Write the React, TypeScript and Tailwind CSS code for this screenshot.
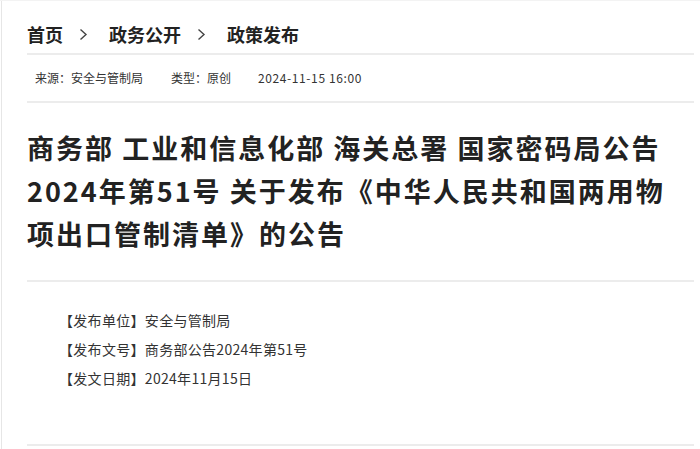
import React from 'react';

const font = { fontFamily: '"Noto Sans CJK SC", "Noto Sans", sans-serif' };

const Chevron = () => (
  <svg width="9" height="13" viewBox="0 0 9 13" fill="none" className="shrink-0">
    <path d="M1.5 1.5 L7 6.5 L1.5 11.5" stroke="#444" strokeWidth="1.4" />
  </svg>
);

const infoRows = [
  { label: '发布单位', value: '安全与管制局' },
  { label: '发布文号', value: '商务部公告2024年第51号' },
  { label: '发文日期', value: '2024年11月15日' },
];

export default function App() {
  return (
    <div
      className="w-[700px] h-[449px] overflow-hidden bg-white border-t border-[#f3f3f3]"
      style={font}
    >
      <div className="ml-px h-full border-l border-[#e6e6e6] pl-[25px]">
        <div className="w-[667px]">
          {/* Breadcrumb */}
          <div className="flex items-center pt-[21px] pb-[7px] text-[18px] leading-[24px] font-bold text-[#222] border-b-2 border-[#ececec]">
            <span>首页</span>
            <span className="ml-[16px] mr-[21px] flex"><Chevron /></span>
            <span>政务公开</span>
            <span className="ml-[16px] mr-[21px] flex"><Chevron /></span>
            <span>政策发布</span>
          </div>

          {/* Meta */}
          <div className="flex items-center h-[48px] pl-[8px] text-[12px] text-[#333] border-b-2 border-[#ececec]">
            <span>来源：安全与管制局</span>
            <span className="ml-[28px]">类型：原创</span>
            <span className="ml-[27px] tracking-[0.6px]">2024-11-15 16:00</span>
          </div>

          {/* Title */}
          <div className="pt-[23px] pb-[25px] border-b-2 border-[#ececec]">
            <h1 className="text-[27px] leading-[43px] font-bold tracking-[2px] text-[#222]">
              商务部 工业和信息化部 海关总署 国家密码局公告
              <br />
              2024年第51号 关于发布《中华人民共和国两用物
              <br />
              项出口管制清单》的公告
            </h1>
          </div>

          {/* Info */}
          <div className="pt-[24px] pb-[51px] pl-[32px] text-[14px] leading-[29px] tracking-[0.3px] text-[#333] border-b-2 border-[#ececec]">
            {infoRows.map((r) => (
              <div key={r.label}>
                【{r.label}】{r.value}
              </div>
            ))}
          </div>
        </div>
      </div>
    </div>
  );
}
